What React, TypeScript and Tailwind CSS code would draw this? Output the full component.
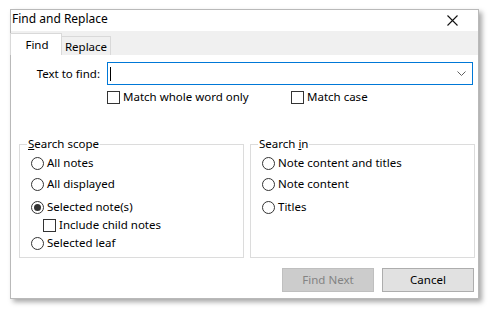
import React from 'react';

const font = { fontFamily: '"Noto Sans", "Open Sans", sans-serif' };

function Radio({ label, checked }: { label: string; checked?: boolean }) {
  return (
    <div className="flex h-[16px] items-center">
      <span className="flex h-[13px] w-[13px] items-center justify-center rounded-full border border-[#333333] bg-white">
        {checked && <span className="h-[7px] w-[7px] rounded-full bg-[#333333]" />}
      </span>
      <span className="ml-[3px]">{label}</span>
    </div>
  );
}

function Checkbox({ label }: { label: string }) {
  return (
    <div className="flex h-[16px] items-center">
      <span className="h-[13px] w-[13px] border border-[#333333] bg-white" />
      <span className="ml-[3px]">{label}</span>
    </div>
  );
}

function GroupBox({ title, children }: { title: React.ReactNode; children: React.ReactNode }) {
  return (
    <div className="relative h-[114px] w-[225px] border border-[#dcdcdc] pl-[11px] pt-[10px]">
      <span className="absolute -top-[9px] left-[7px] bg-white px-[1px] leading-[16px]">{title}</span>
      {children}
    </div>
  );
}

export default function App() {
  return (
    <div className="min-h-screen bg-white pl-[10px] pt-[9px] text-[11.5px] text-black" style={font}>
      <div className="flex h-[290px] w-[469px] flex-col border border-[#b9b9b9] bg-white shadow-[3px_3px_5px_rgba(0,0,0,0.35)]">
        {/* Title bar */}
        <div className="flex h-[21px] items-center justify-between pb-[3px] pl-[1px] pr-[20px]">
          <span className="text-[12px]">Find and Replace</span>
          <svg width="11" height="11" viewBox="0 0 11 11" className="mt-[2px]">
            <path d="M0.5 0.5 L10.5 10.5 M10.5 0.5 L0.5 10.5" stroke="#111" strokeWidth="1.1" />
          </svg>
        </div>

        {/* Tabs */}
        <div className="flex h-[24px] items-end bg-[#f0f0f0]">
          <div className="-ml-[1px] flex h-[22px] w-[52px] items-center justify-center border border-b-0 border-[#d9d9d9] bg-white pl-[2px]">
            Find
          </div>
          <div className="flex h-[19px] w-[49px] items-center justify-center border border-b-0 border-l-0 border-[#d9d9d9] bg-[#f0f0f0] pt-[1px]">
            Replace
          </div>
        </div>

        {/* Body */}
        <div className="flex flex-1 flex-col">
          <div className="mt-[7px] flex items-center">
            <span className="w-[89px] text-right">Text to find:</span>
            <div className="ml-[7px] flex h-[23px] w-[366px] items-center justify-between border border-[#0078d7] pl-[2px] pr-[6px]">
              <span className="h-[14px] w-[1px] bg-black" />
              <svg width="9" height="6" viewBox="0 0 9 6">
                <path d="M0.5 0.5 L4.5 4.5 L8.5 0.5" stroke="#606060" fill="none" strokeWidth="1" />
              </svg>
            </div>
          </div>

          <div className="mt-[4px] flex">
            <div className="ml-[96px] w-[184px]">
              <Checkbox label="Match whole word only" />
            </div>
            <Checkbox label="Match case" />
          </div>

          <div className="ml-[8px] mt-[39px] flex gap-[6px]">
            <GroupBox
              title={
                <>
                  <span className="underline">S</span>earch scope
                </>
              }
            >
              <Radio label="All notes" />
              <div className="mt-[5px]">
                <Radio label="All displayed" />
              </div>
              <div className="mt-[7px]">
                <Radio label="Selected note(s)" checked />
              </div>
              <div className="ml-[12px] mt-[2px]">
                <Checkbox label="Include child notes" />
              </div>
              <div className="mt-[2px]">
                <Radio label="Selected leaf" />
              </div>
            </GroupBox>
            <GroupBox
              title={
                <>
                  Search <span className="underline">i</span>n
                </>
              }
            >
              <Radio label="Note content and titles" />
              <div className="mt-[5px]">
                <Radio label="Note content" />
              </div>
              <div className="mt-[7px]">
                <Radio label="Titles" />
              </div>
            </GroupBox>
          </div>

          <div className="mt-[10px] flex justify-end gap-[8px] pr-[4px]">
            <button className="h-[24px] w-[92px] border border-[#bfbfbf] bg-[#cccccc] text-[#838383]">
              Find Next
            </button>
            <button className="h-[24px] w-[92px] border border-[#adadad] bg-[#e1e1e1]">Cancel</button>
          </div>
        </div>
      </div>
    </div>
  );
}
